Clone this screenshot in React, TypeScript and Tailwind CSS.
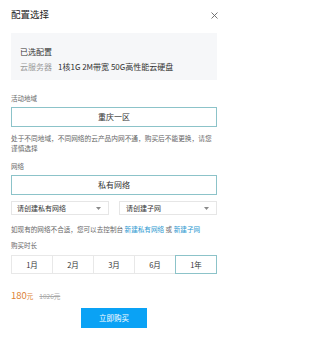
import React, { useState } from "react";

const durations = ["1月", "2月", "3月", "6月", "1年"];

const Caret = () => (
  <svg width="5" height="3" viewBox="0 0 5 3" className="shrink-0">
    <path d="M0 0 L5 0 L2.5 3 Z" fill="#8a8a8a" />
  </svg>
);

export default function App() {
  const [duration, setDuration] = useState("1年");

  return (
    <div
      className="w-[230px] h-[345px] bg-white pl-[11px] pr-[13px] text-[#333]"
      style={{ fontFamily: '"Noto Sans CJK SC", "Noto Sans", sans-serif' }}
    >
      {/* Header */}
      <div className="h-[30px] flex items-center justify-between">
        <span className="text-[9.5px] leading-none text-[#222]">配置选择</span>
        <svg width="7" height="7" viewBox="0 0 7 7" className="-mr-[1px]">
          <path d="M0.5 0.5 L6.5 6.5 M6.5 0.5 L0.5 6.5" stroke="#666" strokeWidth="0.9" />
        </svg>
      </div>

      {/* Selected config */}
      <div className="mt-[3px] h-[47px] bg-[#f6f7f9] pt-[14px] pl-[9px]">
        <div className="text-[8px] leading-[10px] text-[#333]">已选配置</div>
        <div className="mt-[5px] flex text-[8px] leading-[10px]">
          <span className="text-[#9a9a9a] w-[38px]">云服务器</span>
          <span className="text-[#333]">1核1G 2M带宽 50G高性能云硬盘</span>
        </div>
      </div>

      {/* Region */}
      <div className="mt-[13px] text-[6.5px] leading-[10px] text-[#666]">活动地域</div>
      <div className="mt-[4px] h-[20px] border border-[#8cc3c9] flex items-center justify-center text-[8px] text-[#333]">
        重庆一区
      </div>
      <p className="mt-[6px] text-[6.7px] leading-[10px] text-[#666]">
        处于不同地域，不同网络的云产品内网不通，购买后不能更换，请您
        <br />
        谨慎选择
      </p>

      {/* Network */}
      <div className="mt-[8px] text-[6.5px] leading-[10px] text-[#666]">网络</div>
      <div className="mt-[4px] h-[20px] border border-[#8cc3c9] flex items-center justify-center text-[8px] text-[#333]">
        私有网络
      </div>
      <div className="mt-[6px] flex justify-between">
        <div className="w-[98px] h-[14px] border border-[#e6e6e6] flex items-center justify-between pl-[5px] pr-[7px] text-[7px] text-[#333]">
          请创建私有网络
          <Caret />
        </div>
        <div className="w-[98px] h-[14px] border border-[#e6e6e6] flex items-center justify-between pl-[6px] pr-[7px] text-[7px] text-[#333]">
          请创建子网
          <Caret />
        </div>
      </div>
      <p className="mt-[9px] text-[6.6px] leading-[10px] text-[#666] whitespace-nowrap">
        如现有的网络不合适，您可以去控制台 <span className="text-[#2b98d0]">新建私有网络</span> 或{" "}
        <span className="text-[#2b98d0]">新建子网</span>
      </p>

      {/* Duration */}
      <div className="mt-[6px] text-[6.5px] leading-[10px] text-[#666]">购买时长</div>
      <div className="mt-[5px] flex h-[19px]">
        {durations.map((d) => (
          <button
            key={d}
            onClick={() => setDuration(d)}
            className={`flex-1 -ml-px first:ml-0 flex items-center justify-center text-[7.5px] text-[#333] border ${
              duration === d ? "border-[#8cc3c9] relative z-10" : "border-[#e8e8e8]"
            }`}
          >
            {d}
          </button>
        ))}
      </div>

      {/* Price */}
      <div className="mt-[14px] h-[12px] flex items-end leading-none">
        <span className="text-[9.5px] text-[#dd8236]">180</span>
        <span className="text-[6.5px] text-[#dd8236] mb-[1px]">元</span>
        <span className="ml-[6px] text-[6.5px] text-[#aaa] line-through mb-[1px]">1026元</span>
      </div>

      {/* Buy */}
      <div className="mt-[8px] flex justify-center">
        <button className="w-[66px] h-[20px] bg-[#0aa2f5] text-white text-[7.5px] flex items-center justify-center">
          立即购买
        </button>
      </div>
    </div>
  );
}
